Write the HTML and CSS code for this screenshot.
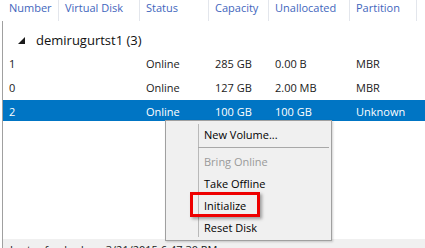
FILE: index.html
```html
<!DOCTYPE html>
<html>
<head>
<meta charset="utf-8">
<link rel="stylesheet" href="styles.css">
</head>
<body>
<div class="pane">
  <div class="header">
    <div class="hc first">Number</div>
    <div class="hc">Virtual Disk</div>
    <div class="hc">Status</div>
    <div class="hc">Capacity</div>
    <div class="hc">Unallocated</div>
    <div class="hc">Partition</div>
    <div class="hc last"></div>
  </div>
  <div class="framed">
    <div class="list">
      <div class="group">
        <svg class="tri" width="7" height="7" viewBox="0 0 7 7"><polygon points="7,0 7,7 0,7" fill="#1a1a1a"/></svg>
        <span class="gname">demirugurtst1 (3)</span>
      </div>
      <div class="row">
        <div class="c first">1</div><div class="c"></div><div class="c">Online</div><div class="c">285 GB</div><div class="c">0.00 B</div><div class="c">MBR</div><div class="c"></div>
      </div>
      <div class="row">
        <div class="c first">0</div><div class="c"></div><div class="c">Online</div><div class="c">127 GB</div><div class="c">2.00 MB</div><div class="c">MBR</div><div class="c"></div>
      </div>
      <div class="row selected">
        <div class="c first">2</div><div class="c"></div><div class="c">Online</div><div class="c">100 GB</div><div class="c">100 GB</div><div class="c">Unknown</div><div class="c"></div>
      </div>
    </div>
    <div class="status">Last refreshed on: 3/21/2015 6:47:30 PM</div>
  </div>

  <div class="menu">
    <div class="mi">New Volume...</div>
    <div class="msep"></div>
    <div class="mi disabled">Bring Online</div>
    <div class="mi">Take Offline</div>
    <div class="mi">Initialize</div>
    <div class="mi">Reset Disk</div>
  </div>
  <div class="highlight"></div>
</div>
</body>
</html>
```
FILE: styles.css
```css
* { box-sizing: border-box; }
html, body { margin: 0; padding: 0; background: #ffffff; }
body {
  font-family: "Open Sans", "Noto Sans", sans-serif;
  font-size: 11px;
  color: #000;
}
.pane {
  position: relative;
  width: 425px;
  height: 248px;
  overflow: hidden;
}
.header {
  display: grid;
  grid-template-columns: 59px 81px 69px 60px 81px 67px 1fr;
  height: 21px;
}
.hc {
  padding-left: 6px;
  line-height: 15px;
  color: #3f66bd;
  border-right: 1px solid #e3e6ec;
  white-space: nowrap;
}
.hc.first { padding-left: 9px; }
.hc.last { border-right: none; }

.framed {
  margin-left: 2px;
  border-left: 1px solid #a0a0a0;
}
.list {
  height: 218px;
}
.group {
  display: flex;
  align-items: flex-start;
  height: 28px;
  padding-top: 10px;
  padding-left: 15px;
}
.tri {
  margin-top: 6px;
  margin-right: 11px;
}
.gname {
  font-size: 13px;
  line-height: 18px;
  color: #111;
}
.row {
  display: grid;
  grid-template-columns: 56px 81px 69px 60px 81px 67px 1fr;
  height: 21px;
  margin-top: 3px;
}
.c {
  padding-left: 6px;
  padding-top: 3px;
  line-height: 18px;
  white-space: nowrap;
  color: #1a1a1a;
}
.c.first { padding-left: 6px; }
.row.selected { background: #0075c4; }
.row.selected .c { color: #ffffff; }

.status {
  height: 20px;
  background: #f0f0f0;
  padding-left: 7px;
  padding-top: 3px;
  line-height: 15px;
  color: #1a1a1a;
}

.menu {
  position: absolute;
  left: 165px;
  top: 120px;
  width: 167px;
  height: 121px;
  background: #f0f0f0;
  border: 1px solid #a0a0a0;
  padding-top: 3px;
  box-shadow: 1px 1px 2px rgba(0,0,0,0.18);
}
.menu::before {
  content: "";
  position: absolute;
  left: 32px;
  top: 3px;
  bottom: 3px;
  width: 1px;
  background: #b9b9b9;
}
.mi {
  height: 22px;
  line-height: 22px;
  padding-left: 38px;
  color: #000;
  white-space: nowrap;
}
.mi.disabled { color: #9a9a9a; }
.msep {
  height: 5px;
  margin-left: 32px;
  margin-right: 2px;
  position: relative;
}
.msep::after {
  content: "";
  position: absolute;
  left: 0;
  right: 0;
  top: 1px;
  height: 1px;
  background: #a8a8a8;
}
.highlight {
  position: absolute;
  left: 190px;
  top: 192px;
  width: 70px;
  height: 25px;
  border: 3px solid #ee0000;
  box-shadow: 2px 2px 3px rgba(0,0,0,0.35);
}
```
